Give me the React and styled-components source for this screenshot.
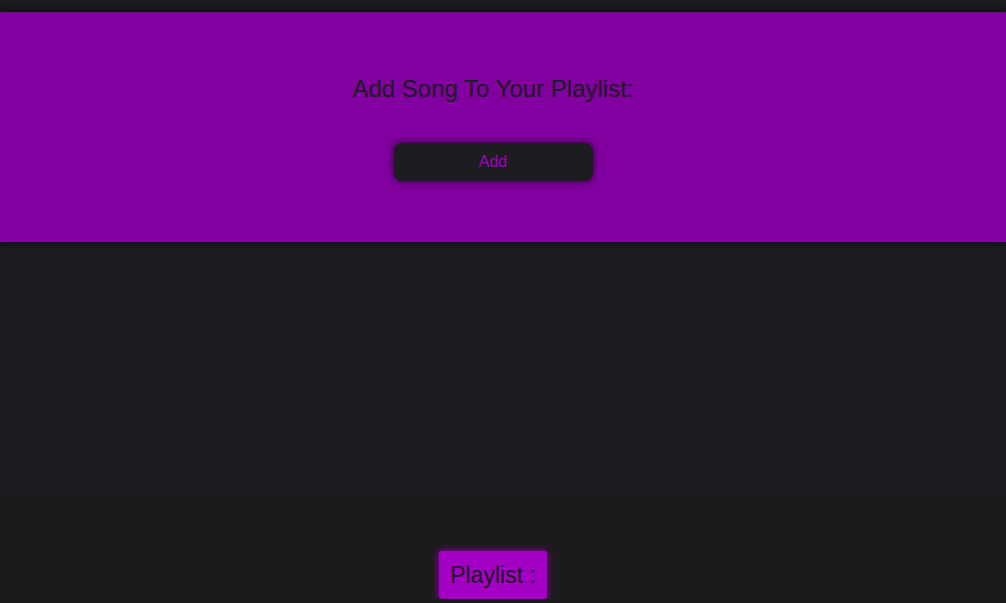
import React from 'react';
import styled, { createGlobalStyle } from 'styled-components';

const GlobalStyle = createGlobalStyle`
  body {
    margin: 0;
    background: #1b1b1b;
    font-family: "Liberation Sans", Arial, sans-serif;
  }
`;

const Page = styled.div`
  display: flex;
  flex-direction: column;
`;

const Main = styled.main`
  background: #1b1d21;
  padding-top: 12px;
  height: 496px;
  box-sizing: border-box;
`;

const Hero = styled.section`
  background: #82009f;
  height: 230px;
  box-shadow: 0 0 10px rgba(0, 0, 0, 0.9);
  display: flex;
  flex-direction: column;
  align-items: center;
  padding: 63px 20px 0 0;
  box-sizing: border-box;
`;

const Title = styled.h2`
  margin: 0;
  font-size: 24px;
  font-weight: normal;
  color: #1b1d21;
`;

const AddButton = styled.button`
  margin-top: 40px;
  width: 199px;
  height: 38px;
  border: none;
  border-radius: 8px;
  background: #1b1d21;
  color: #a300c3;
  font-family: inherit;
  font-size: 16px;
  box-shadow: 0 0 8px rgba(0, 0, 0, 0.7);
  cursor: pointer;
`;

const PlaylistArea = styled.section`
  display: flex;
  justify-content: center;
  padding: 55px 20px 0 0;
`;

const PlaylistLabel = styled.div`
  background: #a300c3;
  color: #1b1d21;
  font-size: 23px;
  padding: 10px 11px;
  border-radius: 3px;
  line-height: 28px;
  box-shadow: 0 0 7px #a300c3;
`;

export default function App() {
  return (
    <Page>
      <GlobalStyle />
      <Main>
        <Hero>
          <Title>Add Song To Your Playlist:</Title>
          <AddButton>Add</AddButton>
        </Hero>
      </Main>
      <PlaylistArea>
        <PlaylistLabel>Playlist :</PlaylistLabel>
      </PlaylistArea>
    </Page>
  );
}
